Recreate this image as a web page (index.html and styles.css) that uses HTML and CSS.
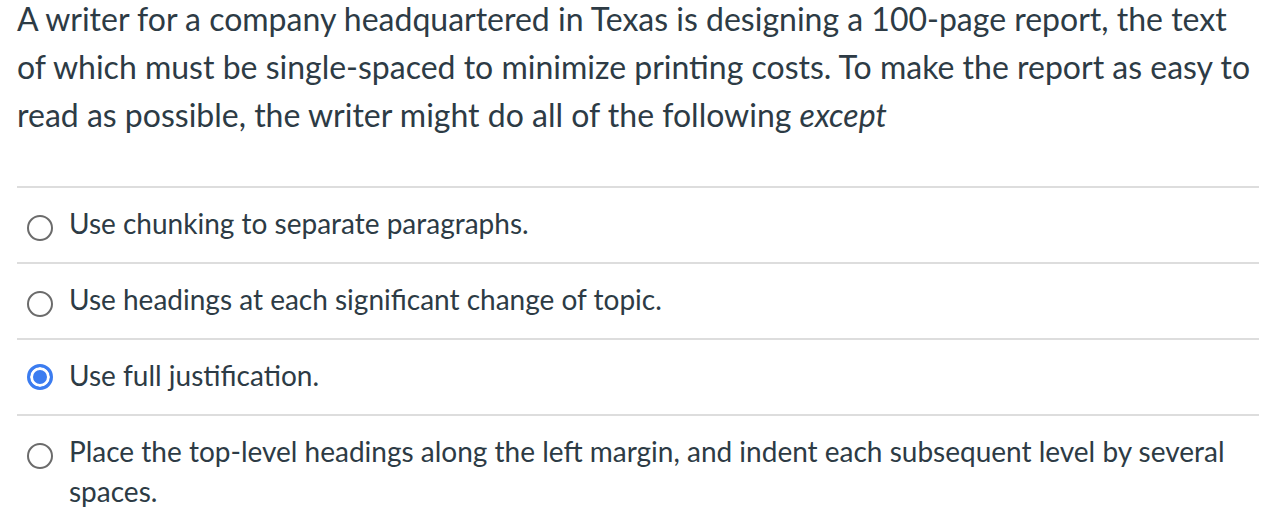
FILE: index.html
```html
<!DOCTYPE html>
<html>
<head>
<meta charset="utf-8">
<link rel="stylesheet" href="styles.css">
</head>
<body>
<div class="question">
  <p class="stem">A writer for a company headquartered in Texas is designing a 100-page report, the text of which must be single-spaced to minimize printing costs. To make the report as easy to read as possible, the writer might do all of the following <em>except</em></p>
  <div class="answers">
    <label class="answer"><span class="radio"></span><span class="text">Use chunking to separate paragraphs.</span></label>
    <label class="answer"><span class="radio"></span><span class="text">Use headings at each significant change of topic.</span></label>
    <label class="answer"><span class="radio checked"></span><span class="text">Use full justification.</span></label>
    <label class="answer"><span class="radio"></span><span class="text">Place the top-level headings along the left margin, and indent each subsequent level by several spaces.</span></label>
  </div>
</div>
</body>
</html>
```
FILE: styles.css
```css
html, body {
  margin: 0;
  padding: 0;
  background: #fff;
}
body {
  font-family: Lato, "Noto Sans", sans-serif;
  color: #2d3b45;
}
.question {
  padding: 0 7px 0 17px;
}
.stem {
  margin: -5px 0 0 0;
  font-size: 32px;
  line-height: 48px;
}
.answers {
  margin-top: 47px;
  border-top: 2px solid #dddddd;
}
.answer {
  display: flex;
  align-items: flex-start;
  padding: 15px 0 19px 10px;
  border-bottom: 2px solid #dddddd;
  font-size: 28px;
  line-height: 40px;
}
.answer:last-child {
  border-bottom: none;
}
.radio {
  flex: none;
  box-sizing: border-box;
  width: 26px;
  height: 26px;
  border: 2px solid #6b6b6b;
  border-radius: 50%;
  margin-top: 12px;
  margin-right: 16px;
}
.radio.checked {
  margin-top: 9px;
  border: 3px solid #3b7cf0;
  background: #3b7cf0;
  box-shadow: inset 0 0 0 3px #fff;
}
```
